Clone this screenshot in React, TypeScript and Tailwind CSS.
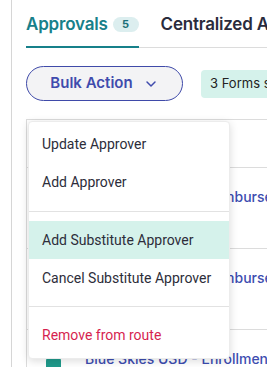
import { ChevronDown } from 'lucide-react';

const rows = [
  { text: 'Blue Skies USD - Reimbursement Request' },
  { text: 'Blue Skies USD - Reimbursement Request' },
  { text: 'Blue Skies USD - Enrollment Application' },
];

export default function App() {
  return (
    <div className="flex min-h-screen bg-white overflow-hidden" style={{ fontFamily: 'Inter, sans-serif' }}>
      {/* sidebar edge */}
      <div className="w-3 shrink-0 border-r border-[#d6d6d6]" />

      <div className="flex-1 min-w-0 pl-[14px] overflow-hidden">
        {/* tabs */}
        <div className="flex h-12 border-b border-[#dcdcdc] whitespace-nowrap">
          <div className="flex shrink-0 items-center -mb-px border-b-2 border-[#17808a] pt-[3px]">
            <span className="text-[17px] font-semibold text-[#17808a] tracking-[-0.2px]">Approvals</span>
            <span className="ml-[5px] flex items-center justify-center w-[26px] h-[15px] rounded-full bg-[#dceeef] text-[11px] font-bold text-[#1b6f78]">
              5
            </span>
          </div>
          <div className="flex shrink-0 items-center ml-[22px] pt-[3px]">
            <span className="text-[17px] font-semibold text-[#2a2b3c] tracking-[-0.2px]">Centralized Approvals</span>
          </div>
        </div>

        {/* actions */}
        <div className="flex items-center mt-[18px] whitespace-nowrap">
          <button className="flex shrink-0 items-center justify-center gap-[10px] w-[157px] h-[35px] rounded-full border border-[#3f4aa9] bg-[#f3f3f5] text-[15px] font-semibold text-[#3f4bad]">
            Bulk Action
            <ChevronDown className="w-4 h-4" strokeWidth={2.2} />
          </button>
          <div className="ml-[18px] shrink-0 flex items-center h-7 px-[9px] rounded bg-[#d5f2eb] text-[13px] text-[#222]">
            3 Forms selected
          </div>
        </div>

        {/* table with open menu */}
        <div className="relative mt-[18px] border-l border-t border-[#dcdcdc]">
          <div className="h-[47px]" />
          {rows.map((r, i) => (
            <div key={i} className="flex items-start h-[81px] border-t border-[#dcdcdc] pl-[19px] gap-6 whitespace-nowrap">
              <div className="mt-[27px] w-[15px] h-4 shrink-0 rounded-sm bg-[#1f9a8b]" />
              <span className="mt-[19px] leading-5 text-[14px] font-medium text-[#3d4db0]">{r.text}</span>
            </div>
          ))}

          <div
            className="absolute left-px top-px w-[202px] bg-white rounded border border-[#ececec] shadow-[0_2px_8px_rgba(0,0,0,0.14)] pt-[3px] pb-1 text-[14px] text-[#2d2d3a]"
            style={{ fontFamily: 'Roboto, sans-serif' }}
          >
            <div className="h-[38px] flex items-center px-[13px]">Update Approver</div>
            <div className="h-[38px] flex items-center px-[13px]">Add Approver</div>
            <div className="mt-[10px] mb-[9px] h-px bg-[#e2e2e2]" />
            <div className="h-[38px] flex items-center px-[13px] bg-[#d5f2eb]">Add Substitute Approver</div>
            <div className="h-[38px] flex items-center px-[13px]">Cancel Substitute Approver</div>
            <div className="my-[9px] h-px bg-[#e2e2e2]" />
            <div className="h-[38px] flex items-center px-[13px] text-[#d61f50]">Remove from route</div>
          </div>
        </div>
      </div>
    </div>
  );
}
